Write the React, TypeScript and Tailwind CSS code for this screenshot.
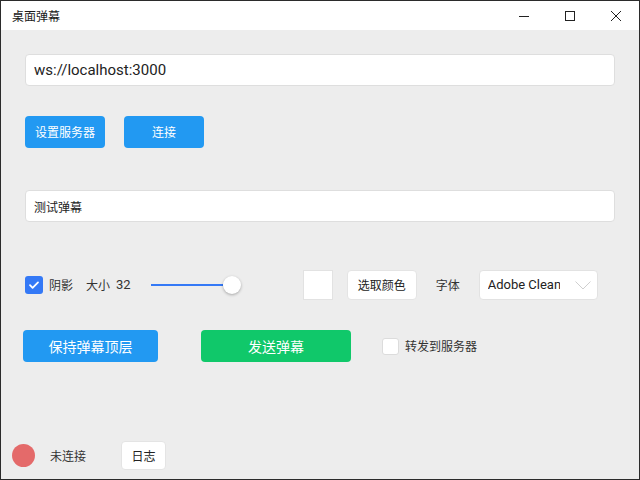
import React, { useState } from 'react';

const cjk = "font-['Microsoft_YaHei','Noto_Sans_CJK_SC',sans-serif]";
const latin = "font-['Segoe_UI',Roboto,'Noto_Sans_CJK_SC',sans-serif]";

const TitleBar: React.FC = () => (
    <div className="h-[29px] bg-white flex items-center shrink-0">
        <span className={`ml-[11px] text-[12px] text-[#1a1a1a] ${cjk}`}>桌面弹幕</span>
        <div className="ml-auto flex h-full">
            <div className="w-[46px] flex items-center justify-center">
                <svg width="10" height="10" viewBox="0 0 10 10"><path d="M0 5.5h10" stroke="#222" strokeWidth="1" /></svg>
            </div>
            <div className="w-[46px] flex items-center justify-center">
                <svg width="10" height="10" viewBox="0 0 10 10"><rect x="0.5" y="0.5" width="9" height="9" fill="none" stroke="#222" strokeWidth="1" /></svg>
            </div>
            <div className="w-[46px] flex items-center justify-center">
                <svg width="10" height="10" viewBox="0 0 10 10"><path d="M0 0L10 10M10 0L0 10" stroke="#222" strokeWidth="1" /></svg>
            </div>
        </div>
    </div>
);

const App: React.FC = () => {
    const [url, setUrl] = useState('ws://localhost:3000');
    const [text, setText] = useState('测试弹幕');

    return (
        <div className="w-[640px] h-[480px] border border-[#2b2b2b] flex flex-col bg-[#ededed] overflow-hidden">
            <TitleBar />
            <div className="flex-1 flex flex-col px-6">
                <input
                    value={url}
                    onChange={(e) => setUrl(e.target.value)}
                    className={`mt-6 h-[32px] w-full bg-white border border-[#dedede] rounded-[4px] px-[8px] text-[15px] text-[#222] outline-none ${latin}`}
                />
                <div className="mt-[30px] flex gap-[19px]">
                    <button className={`w-[80px] h-[32px] bg-[#2299f2] text-white rounded-[4px] text-[12px] ${cjk}`}>设置服务器</button>
                    <button className={`w-[80px] h-[32px] bg-[#2299f2] text-white rounded-[4px] text-[12px] ${cjk}`}>连接</button>
                </div>
                <input
                    value={text}
                    onChange={(e) => setText(e.target.value)}
                    className={`mt-[42px] h-[32px] w-full bg-white border border-[#dedede] rounded-[4px] px-[8px] text-[12px] text-[#222] outline-none ${cjk}`}
                />
                <div className={`mt-[48px] h-[30px] flex items-center text-[12px] text-[#333] ${cjk}`}>
                    <div className="w-[18px] h-[18px] rounded-[3px] bg-[#3479f6] flex items-center justify-center">
                        <svg width="12" height="12" viewBox="0 0 12 12"><path d="M2 6.2l2.6 2.6L10 3.4" fill="none" stroke="white" strokeWidth="1.8" strokeLinecap="round" strokeLinejoin="round" /></svg>
                    </div>
                    <span className="ml-[6px]">阴影</span>
                    <span className="ml-[13px]">大小</span>
                    <span className={`ml-[6px] text-[13px] ${latin}`}>32</span>
                    <div className="ml-[20px] w-[90px] h-[18px] flex items-center">
                        <div className="w-[72px] h-[2px] bg-[#3479f6]" />
                        <div className="w-[18px] h-[18px] rounded-full bg-white shadow-[0_1px_3px_rgba(0,0,0,0.3)]" />
                    </div>
                    <div className="ml-[62px] w-[30px] h-[30px] bg-white border border-[#e2e2e2]" />
                    <button className="ml-[14px] w-[70px] h-[30px] bg-white rounded-[4px] border border-[#e4e4e4] text-[#222]">选取颜色</button>
                    <span className="ml-[19px]">字体</span>
                    <div className={`ml-[19px] w-[119px] h-[30px] bg-white rounded-[4px] border border-[#e2e2e2] flex items-center pl-[8px] pr-[6px] ${latin}`}>
                        <span className="text-[13px] text-[#222] w-[72px] overflow-hidden whitespace-nowrap">Adobe Clean</span>
                        <svg className="ml-auto" width="16" height="9" viewBox="0 0 16 9"><path d="M0.5 0.5L8 8L15.5 0.5" fill="none" stroke="#cfcfcf" strokeWidth="1" /></svg>
                    </div>
                </div>
                <div className={`mt-[30px] flex items-center ${cjk}`}>
                    <button className="-ml-[2px] w-[135px] h-[32px] bg-[#2299f2] text-white rounded-[4px] text-[14px]">保持弹幕顶层</button>
                    <button className="ml-[43px] w-[150px] h-[32px] bg-[#10c86a] text-white rounded-[4px] text-[14px]">发送弹幕</button>
                    <div className="ml-[31px] w-[17px] h-[17px] bg-white rounded-[3px] border border-[#dcdcdc]" />
                    <span className="ml-[6px] text-[12px] text-[#333]">转发到服务器</span>
                </div>
                <div className={`mt-auto mb-[9px] -ml-[13px] flex items-center text-[12px] text-[#333] ${cjk}`}>
                    <div className="w-[23px] h-[23px] rounded-full bg-[#e46a6a]" />
                    <span className="ml-[15px]">未连接</span>
                    <button className="ml-[35px] w-[45px] h-[29px] bg-white rounded-[4px] border border-[#e4e4e4] text-[#222]">日志</button>
                </div>
            </div>
        </div>
    );
};

export default App;
